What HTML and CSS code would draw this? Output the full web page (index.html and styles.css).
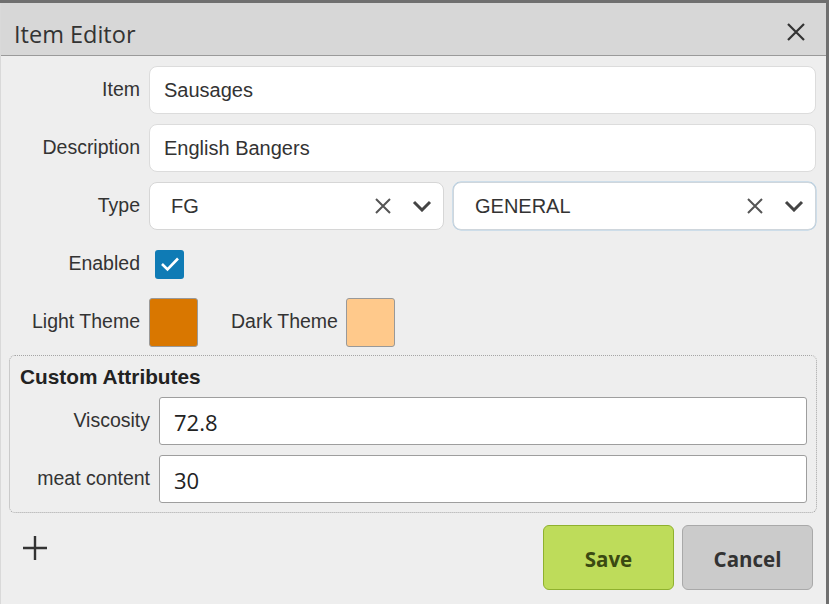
FILE: index.html
```html
<!DOCTYPE html>
<html>
<head>
<meta charset="utf-8">
<link rel="stylesheet" href="styles.css">
</head>
<body>
<div class="dialog">
  <div class="header">
    <span class="title">Item Editor</span>
    <svg class="close" width="20" height="20" viewBox="0 0 20 20"><path d="M2 2 L18 18 M18 2 L2 18" stroke="#333" stroke-width="2.2" fill="none"/></svg>
  </div>
  <div class="content">
    <div class="form">
      <label class="lbl">Item</label>
      <div class="field">Sausages</div>
      <label class="lbl">Description</label>
      <div class="field">English Bangers</div>
      <label class="lbl">Type</label>
      <div class="selects">
        <div class="select first">
          <span class="sel-text">FG</span>
          <svg class="clr" width="18" height="18" viewBox="0 0 18 18"><path d="M2 2 L16 16 M16 2 L2 16" stroke="#555" stroke-width="2" fill="none"/></svg>
          <svg class="chev" width="20" height="12" viewBox="0 0 20 12"><path d="M2 2 L10 10 L18 2" stroke="#444" stroke-width="3" fill="none"/></svg>
        </div>
        <div class="select second">
          <span class="sel-text">GENERAL</span>
          <svg class="clr" width="18" height="18" viewBox="0 0 18 18"><path d="M2 2 L16 16 M16 2 L2 16" stroke="#555" stroke-width="2" fill="none"/></svg>
          <svg class="chev" width="20" height="12" viewBox="0 0 20 12"><path d="M2 2 L10 10 L18 2" stroke="#444" stroke-width="3" fill="none"/></svg>
        </div>
      </div>
      <label class="lbl">Enabled</label>
      <div class="inline">
        <span class="check"><svg width="20" height="16" viewBox="0 0 20 16"><path d="M2 8 L7.5 13.5 L18 2.5" stroke="#fff" stroke-width="2.6" fill="none"/></svg></span>
      </div>
      <label class="lbl">Light Theme</label>
      <div class="inline">
        <span class="swatch light"></span>
        <span class="lbl2">Dark Theme</span>
        <span class="swatch dark"></span>
      </div>
    </div>
    <div class="attrs">
      <div class="attrs-title">Custom Attributes</div>
      <div class="attr-grid">
        <label class="lbl">Viscosity</label>
        <div class="num">72.8</div>
        <label class="lbl">meat content</label>
        <div class="num">30</div>
      </div>
    </div>
    <div class="footer">
      <svg class="plus" width="26" height="26" viewBox="0 0 26 26"><path d="M13 1 V25 M1 13 H25" stroke="#333" stroke-width="2.4" fill="none"/></svg>
      <div class="buttons">
        <button class="btn save">Save</button>
        <button class="btn cancel">Cancel</button>
      </div>
    </div>
  </div>
</div>
</body>
</html>
```
FILE: styles.css
```css
html, body {
  margin: 0;
  padding: 0;
  background: #6f6f6f;
  height: 604px;
  overflow: hidden;
}
.dialog {
  margin: 3px 3px 0 0;
  height: 601px;
  background: #eeeeee;
  box-sizing: border-box;
  border-left: 1px solid #d9d9d9;
  font-family: "Liberation Sans", Arial, sans-serif;
  color: #333;
}
.header {
  height: 53px;
  box-sizing: border-box;
  background: #d7d7d7;
  border-bottom: 1px solid #9a9a9a;
  display: flex;
  align-items: center;
  justify-content: space-between;
  padding: 6px 20px 0 13px;
}
.title {
  font-family: "Open Sans", sans-serif;
  font-size: 23.5px;
  color: #333;
  padding-top: 4px;
}
.close { margin-top: 0; }
.content {
  padding: 10px 10px 0 8px;
}
.form {
  display: grid;
  grid-template-columns: 131px 1fr;
  column-gap: 9px;
  row-gap: 10px;
}
.lbl {
  font-size: 19.5px;
  text-align: right;
  align-self: center;
  color: #333;
  white-space: nowrap;
  padding-bottom: 1px;
}
.field {
  height: 48px;
  box-sizing: border-box;
  background: #fff;
  border: 1px solid #dcdcdc;
  border-radius: 8px;
  padding: 0 14px;
  display: flex;
  align-items: center;
  font-size: 20px;
  color: #333;
}
.selects {
  display: flex;
  gap: 9px;
}
.select {
  height: 48px;
  box-sizing: border-box;
  background: #fff;
  border: 1px solid #d6d6d6;
  border-radius: 8px;
  display: flex;
  align-items: center;
  padding: 0 11px 0 21px;
  font-size: 20px;
  color: #333;
}
.select.first { width: 295px; }
.select.second {
  flex: 1;
  border-color: #cfd6dc;
  box-shadow: 0 0 0 0.5px rgba(50, 140, 210, 0.35);
}
.sel-text { flex: 1; }
.clr { margin-right: 20px; }
.inline {
  height: 48px;
  display: flex;
  align-items: center;
}
.check {
  width: 29px;
  height: 29px;
  margin-left: 6px;
  background: #0f7bb5;
  border-radius: 3px;
  display: flex;
  align-items: center;
  justify-content: center;
}
.swatch {
  width: 49px;
  height: 49px;
  box-sizing: border-box;
  border: 1px solid #999;
  border-radius: 3px;
}
.swatch.light { background: #d97700; }
.swatch.dark { background: #ffc98b; }
.lbl2 {
  font-size: 19.5px;
  margin: 0 8px 1px 33px;
}
.attrs {
  margin-top: 9px;
  margin-right: -1px;
  border: 1px dotted #a5a5a5;
  border-radius: 6px;
  padding: 9px 9px 9px 0;
}
.attrs-title {
  font-weight: bold;
  font-size: 20.8px;
  color: #222;
  padding-left: 10px;
  line-height: 24px;
  margin-bottom: 8px;
}
.attr-grid {
  display: grid;
  grid-template-columns: 140px 1fr;
  column-gap: 9px;
  row-gap: 10px;
}
.num {
  height: 48px;
  box-sizing: border-box;
  background: #fff;
  border: 1px solid #9e9e9e;
  border-radius: 3px;
  padding: 2px 14px 0;
  display: flex;
  align-items: center;
  font-family: "Open Sans", sans-serif;
  font-size: 22px;
  color: #222;
}
.footer {
  display: flex;
  justify-content: space-between;
  align-items: flex-start;
  margin-top: 12px;
  padding-right: 3px;
}
.plus {
  margin: 10px 0 0 13px;
}
.buttons {
  display: flex;
  gap: 8px;
}
.btn {
  width: 131px;
  height: 65px;
  border-radius: 6px;
  font-family: "Open Sans", sans-serif;
  font-weight: bold;
  font-size: 20.5px;
  padding-top: 3px;
  cursor: pointer;
}
.save {
  background: #bedc5a;
  border: 1px solid #8fb12e;
  color: #3b4a12;
}
.cancel {
  background: #cbcbcb;
  border: 1px solid #a9a9a9;
  color: #333;
}
```
